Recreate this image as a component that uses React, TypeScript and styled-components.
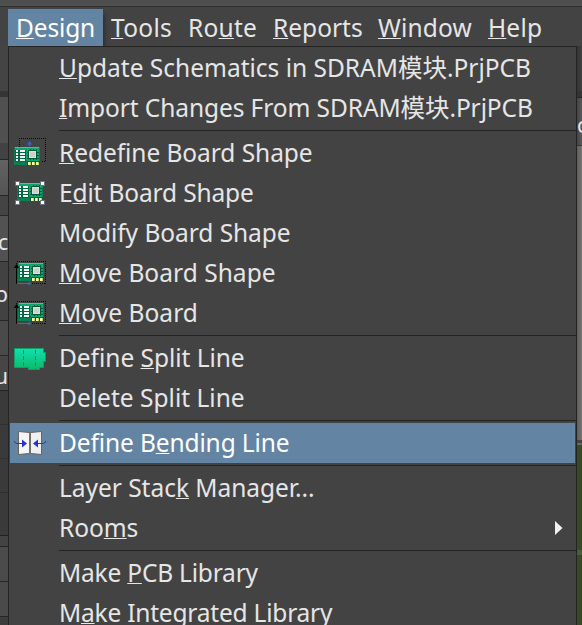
import React from 'react';
import styled, { createGlobalStyle, css } from 'styled-components';

const GlobalStyle = createGlobalStyle`
  * { box-sizing: border-box; }
  html, body { margin: 0; background: #434343; overflow: hidden; }
  body { font-family: "Noto Sans", "Noto Sans CJK SC", sans-serif; font-size: 24.5px; color: #e6e6e6; }
`;

const Page = styled.div`
  width: 582px;
  height: 625px;
  display: flex;
  flex-direction: column;
  overflow: hidden;
  background: #434343;
`;

const TitleStrip = styled.div`
  flex: none;
  height: 7px;
  background: #4f4f4f;
  border-bottom: 1px solid #303030;
`;

const MenuBar = styled.nav`
  flex: none;
  height: 39px;
  display: flex;
  padding: 2px 0 0 8px;
  background: #434343;
`;

const BarItem = styled.div<{ $width: number; $active?: boolean; $spacing: number }>`
  flex: none;
  width: ${p => p.$width}px;
  height: 37px;
  padding-left: 8px;
  line-height: 37px;
  white-space: pre;
  letter-spacing: ${p => p.$spacing}px;
  ${p => p.$active && css`
    background: #6384a3;
    color: #fff;
    box-shadow: 3px 5px 4px -1px #2f2f2f;
    clip-path: inset(0 -8px 0 0);
  `}
`;

const Key = styled.span`
  text-decoration: underline 1px;
  text-underline-offset: 1px;
  text-decoration-skip-ink: none;
`;

const Body = styled.div`
  flex: 1;
  min-height: 0;
  display: flex;
`;

const SideStrip = styled.div<{ $width: number; $align: string }>`
  flex: none;
  width: ${p => p.$width}px;
  display: flex;
  flex-direction: column;
  overflow: hidden;
  > div { justify-content: ${p => p.$align}; }
`;

const Band = styled.div<{ $height: number; $fill: string; $line?: string }>`
  flex: none;
  height: ${p => p.$height}px;
  display: flex;
  align-items: center;
  padding-top: 6px;
  overflow: hidden;
  background: ${p => p.$fill};
  border-bottom: ${p => (p.$line ? `1px solid ${p.$line}` : 'none')};
  font-size: 21px;
  line-height: 20px;
`;

const Spacer = styled(Band)`
  padding-top: 0;
`;

const Menu = styled.div`
  flex: none;
  width: 569px;
  padding-top: 1px;
  overflow: hidden;
  background: #434343;
  border: 1px solid #242424;
  border-bottom: 0;
`;

const Row = styled.div<{ $active?: boolean }>`
  height: 40px;
  margin: 0 1px;
  display: flex;
  align-items: center;
  color: ${p => (p.$active ? '#fff' : '#e6e6e6')};
  background: ${p => (p.$active ? '#6384a3' : 'transparent')};
`;

const IconSlot = styled.div`
  flex: none;
  width: 49px;
  height: 32px;
  padding-left: 4px;
  svg { display: block; overflow: visible; }
`;

const Label = styled.div<{ $spacing: number }>`
  flex: 1;
  line-height: 40px;
  white-space: pre;
  letter-spacing: ${p => p.$spacing}px;
`;

const Arrow = styled.svg`
  flex: none;
  margin-right: 12px;
`;

const Divider = styled.div`
  height: 1px;
  margin: 2px 0 2px 50px;
  background: #242424;
`;

function Board({ x, y }: { x: number; y: number }) {
  return (
    <g transform={`translate(${x} ${y})`} shapeRendering="crispEdges">
      <rect width="26" height="18" fill="#078052" />
      <rect x="1" y="1" width="24" height="16" fill="#09a870" />
      <rect x="1" y="0" width="24" height="1" fill="#36cf9c" />
      <rect x="1" y="13" width="12" height="4" fill="#078052" />
      {[3, 6, 9, 12].map(v => (
        <g key={v}>
          <rect x="1" y={v} width="11" height="3" fill="#056641" />
          <rect x="2" y={v} width="2" height="2" fill="#f7fff9" />
          <rect x="6" y={v} width="5" height="2" fill="#f7fff9" />
        </g>
      ))}
      <path d="M16 2v11M19 2v11M22 2v11M13 5h12M13 8h12M13 11h12" stroke="#045638" />
      <rect x="14" y="3" width="9" height="9" fill="#045638" />
      <rect x="15" y="4" width="7" height="7" fill="#d9e1dc" />
      <rect x="16" y="5" width="5" height="5" fill="#c9d2cd" />
      <rect x="13" y="14" width="13" height="4" fill="#055c39" />
      {[14, 18, 22].map(v => (
        <g key={v}>
          <rect x={v} y="15" width="2" height="3" fill="#fbffbb" />
          <rect x={v + 2} y="15" width="1" height="3" fill="#b5d94e" />
        </g>
      ))}
    </g>
  );
}

function RedefineIcon() {
  return (
    <svg width="32" height="32">
      <path d="M5.5 10V1.5H31.5V24H27" fill="none" stroke="#090909" strokeDasharray="1 1" shapeRendering="crispEdges" />
      <path d="M15.5 4l3 3.5h-2V9h-2V7.5h-2z" fill="#2f62d0" />
      <Board x={0} y={10} />
    </svg>
  );
}

function EditIcon() {
  return (
    <svg width="32" height="32">
      <Board x={3} y={6} />
      {[[1, 4], [26, 4], [1, 23], [26, 23]].map(([x, y]) => (
        <rect key={`${x}-${y}`} x={x + 0.5} y={y + 0.5} width="4" height="4" fill="#fff" stroke="#69737f" />
      ))}
    </svg>
  );
}

function MoveIcon() {
  return (
    <svg width="32" height="32">
      <rect x="2.5" y="4.5" width="29" height="22" fill="none" stroke="#090909" strokeDasharray="1 1" shapeRendering="crispEdges" />
      <Board x={4} y={6} />
      <path d="M2.5 27V10" stroke="#000" />
      <path d="M2.5 7l2.7 4h-5.4z" fill="#000" />
      <path d="M3 26.5h12" stroke="#3469d8" />
      <path d="M17.5 26.5l-3-2v4z" fill="#3469d8" />
    </svg>
  );
}

function SplitIcon() {
  return (
    <svg width="32" height="32">
      <defs>
        <linearGradient id="split" x1="0" y1="0" x2="0" y2="1">
          <stop offset="0" stopColor="#10e0b0" />
          <stop offset="1" stopColor="#0cb968" />
        </linearGradient>
      </defs>
      <path d="M.5 6.5H29.5V10.5H31.5V19.5H29.5V25.5H25.5V27.5H14.5V25.5H.5z" fill="url(#split)" stroke="#0ba267" />
      <path d="M9.5 8V25M21.5 8V27" stroke="#087fb0" strokeDasharray="4 2" />
    </svg>
  );
}

function BendIcon() {
  return (
    <svg width="32" height="32">
      <path d="M4.5 4.5L15.5 5.5V26.5L4.5 27.5z" fill="#f5f5f5" stroke="#66645f" />
      <path d="M27.5 4.5L16.5 5.5V26.5L27.5 27.5z" fill="#f0f0f0" stroke="#66645f" />
      <path d="M16 5V27" stroke="#74726d" strokeWidth="2" />
      <path d="M0 14q1 2.5 3 2.5H9M32 14q-1 2.5-3 2.5H23" fill="none" stroke="#2938b2" />
      <path d="M8 12.5l5 4-5 4zM24 12.5l-5 4 5 4z" fill="#2430cf" />
    </svg>
  );
}

type Entry = {
  pre?: string;
  mnemonic?: string;
  post: string;
  spacing?: number;
  icon?: React.ReactNode;
  active?: boolean;
  sub?: boolean;
};

const bar: (Entry & { width: number })[] = [
  { mnemonic: 'D', post: 'esign', width: 95, spacing: -0.15, active: true },
  { mnemonic: 'T', post: 'ools', width: 77, spacing: 0.28 },
  { pre: 'Ro', mnemonic: 'u', post: 'te', width: 85, spacing: 0.22 },
  { mnemonic: 'R', post: 'eports', width: 105 },
  { mnemonic: 'W', post: 'indow', width: 110, spacing: 0.18 },
  { mnemonic: 'H', post: 'elp', width: 80, spacing: 0.2 },
];

const groups: Entry[][] = [
  [
    { mnemonic: 'U', post: 'pdate Schematics in SDRAM模块.PrjPCB' },
    { mnemonic: 'I', post: 'mport Changes From SDRAM模块.PrjPCB', spacing: -0.09 },
  ],
  [
    { mnemonic: 'R', post: 'edefine Board Shape', spacing: -0.06, icon: <RedefineIcon /> },
    { pre: 'E', mnemonic: 'd', post: 'it Board Shape', spacing: -0.15, icon: <EditIcon /> },
    { post: 'Modify Board Shape', spacing: -0.05 },
    { mnemonic: 'M', post: 'ove Board Shape', spacing: 0.04, icon: <MoveIcon /> },
    { mnemonic: 'M', post: 'ove Board', spacing: 0.06, icon: <MoveIcon /> },
  ],
  [
    { pre: 'Define ', mnemonic: 'S', post: 'plit Line', spacing: -0.04, icon: <SplitIcon /> },
    { post: 'Delete Split Line', spacing: 0.02 },
  ],
  [{ pre: 'Define B', mnemonic: 'e', post: 'nding Line', spacing: -0.12, icon: <BendIcon />, active: true }],
  [
    { pre: 'Layer Stac', mnemonic: 'k', post: ' Manager...', spacing: -0.03 },
    { pre: 'Roo', mnemonic: 'm', post: 's', spacing: -0.05, sub: true },
  ],
  [
    { pre: 'Make ', mnemonic: 'P', post: 'CB Library', spacing: -0.2 },
    { pre: 'M', mnemonic: 'a', post: 'ke Integrated Library', spacing: -0.21 },
  ],
];

type BandData = [height: number, fill: string, line?: string, text?: string];

const leftBands: BandData[] = [
  [45, '#444444'],
  [6, '#343434'],
  [46, '#505050'],
  [17, '#424242', '#262626'],
  [36, 'linear-gradient(#626262, #545454)', '#262626'],
  [20, '#444444', '#262626'],
  [46, '#525252', '#262626', 'c'],
  [59, '#424242', '#262626', 'o'],
  [35, '#4a4a4a', '#262626'],
  [35, '#464646', '#262626', 'u'],
  [34, '#3a3a3a', '#303030'],
  [34, '#3a3a3a', '#303030'],
  [34, '#3a3a3a', '#303030'],
  [43, '#3a3a3a', '#222222'],
  [11, '#434343', '#262626'],
  [35, '#4b4b4b', '#262626'],
  [35, '#4a4a4a', '#262626'],
  [10, '#3d3d3d'],
];

const rightBands: BandData[] = [
  [45, 'linear-gradient(90deg, #333333, #414141)'],
  [7, '#343434', '#222222'],
  [48, 'linear-gradient(90deg, #444444, #5a5a5a)', '#333333', 'o'],
  [294, 'linear-gradient(90deg, #5f5d5b, #797572)'],
  [3, '#444444'],
  [2, '#5a7348'],
  [105, '#344b23'],
  [5, '#46603a'],
  [75, '#344b23'],
];

function Caption({ pre, mnemonic, post }: Pick<Entry, 'pre' | 'mnemonic' | 'post'>) {
  return <>{pre}{mnemonic && <Key>{mnemonic}</Key>}{post}</>;
}

function Strip({ width, align, bands }: { width: number; align: string; bands: BandData[] }) {
  return (
    <SideStrip $width={width} $align={align}>
      {bands.map(([height, fill, line, text], i) =>
        text
          ? <Band key={i} $height={height} $fill={fill} $line={line}>{text}</Band>
          : <Spacer key={i} $height={height} $fill={fill} $line={line} />
      )}
    </SideStrip>
  );
}

export default function App() {
  return (
    <>
      <GlobalStyle />
      <Page>
        <TitleStrip />
        <MenuBar>
          {bar.map(b => (
            <BarItem key={b.post} $width={b.width} $active={b.active} $spacing={b.spacing ?? 0}>
              <Caption pre={b.pre} mnemonic={b.mnemonic} post={b.post} />
            </BarItem>
          ))}
        </MenuBar>
        <Body>
          <Strip width={8} align="flex-end" bands={leftBands} />
          <Menu>
            {groups.map((group, i) => (
              <React.Fragment key={i}>
                {i > 0 && <Divider />}
                {group.map(e => (
                  <Row key={(e.pre ?? '') + e.post} $active={e.active}>
                    <IconSlot>{e.icon}</IconSlot>
                    <Label $spacing={e.spacing ?? 0}>
                      <Caption pre={e.pre} mnemonic={e.mnemonic} post={e.post} />
                    </Label>
                    {e.sub && <Arrow width="8" height="14"><path d="M0 0L7.5 7L0 14z" fill="#f0f0f0" /></Arrow>}
                  </Row>
                ))}
              </React.Fragment>
            ))}
          </Menu>
          <Strip width={5} align="flex-start" bands={rightBands} />
        </Body>
      </Page>
    </>
  );
}
